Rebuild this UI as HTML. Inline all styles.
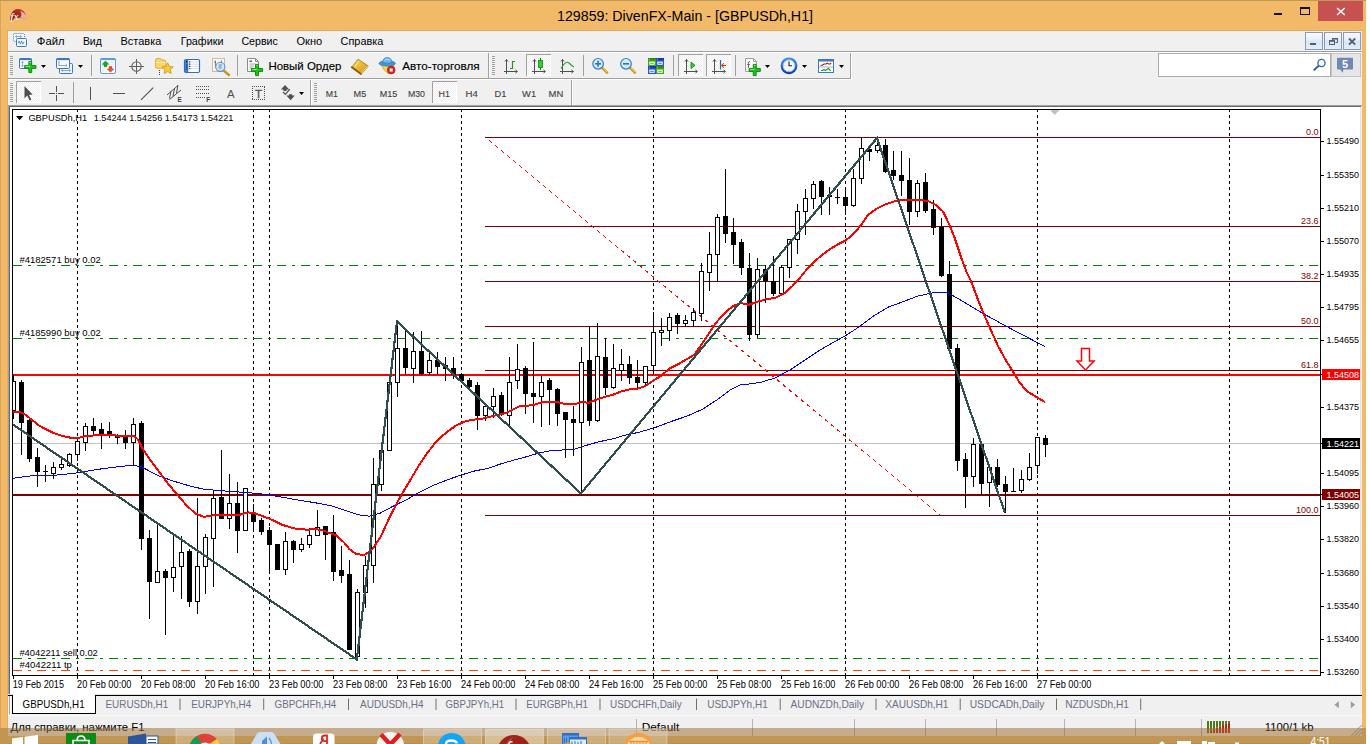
<!DOCTYPE html>
<html lang="ru"><head><meta charset="utf-8"><title>129859: DivenFX-Main - [GBPUSDh,H1]</title>
<style>
html,body{margin:0;padding:0;background:#fff;overflow:hidden}
body{width:1370px;height:744px;position:relative;font-family:"Liberation Sans", sans-serif;}
.abs{position:absolute}
#win{position:absolute;left:0;top:0;width:1366px;height:744px;background:#F2B968;overflow:hidden}
#client{position:absolute;left:7px;top:30px;width:1355px;height:706px;background:#F0F0F0;border-left:1px solid #E2AB5E;border-top:1px solid #E2AB5E;box-sizing:border-box}
svg{position:absolute;left:0;top:0;font-family:"Liberation Sans", sans-serif}
svg text{white-space:pre}
</style></head><body>
<div id="win">
<div id="client"></div>

<svg width="1366" height="744" viewBox="0 0 1366 744">
<defs><linearGradient id="gclk" x1="0" y1="0" x2="0" y2="1"><stop offset="0" stop-color="#3A8EEA"/><stop offset="1" stop-color="#0A3F9E"/></linearGradient><linearGradient id="gbook" x1="0" y1="0" x2="1" y2="1"><stop offset="0" stop-color="#F7DC6A"/><stop offset="0.55" stop-color="#E6B530"/><stop offset="1" stop-color="#C8901A"/></linearGradient><linearGradient id="gapp" x1="0" y1="1" x2="1" y2="0"><stop offset="0" stop-color="#7E0A04"/><stop offset="0.5" stop-color="#A82818"/><stop offset="1" stop-color="#C8382A"/></linearGradient><linearGradient id="gbtn" x1="0" y1="0" x2="0" y2="1"><stop offset="0" stop-color="#F6FAFE"/><stop offset="0.45" stop-color="#E6EFFA"/><stop offset="0.5" stop-color="#D9E6F6"/><stop offset="1" stop-color="#E3EDF9"/></linearGradient><pattern id="chk" width="2" height="2" patternUnits="userSpaceOnUse"><rect width="2" height="2" fill="#fff"/><rect width="1" height="1" fill="#EDEDED"/><rect x="1" y="1" width="1" height="1" fill="#EDEDED"/></pattern></defs>
<rect x="0" y="0" width="1366" height="1" fill="#BE9A58"/>
<rect x="0" y="1" width="1" height="743" fill="#D9A55C"/>
<g id="appicon"><path d="M10.3 20.8 C9.8 15 12 10 17 9 C21.5 8.3 25.2 11.5 26 16 C26.2 18 25.8 19 25 19.2 C22.5 17.5 18.5 17.2 16 18.5 C14 19.5 12.5 21 10.3 20.8 Z" fill="url(#gapp)"/><path d="M20 10.5 C23 11.8 25.6 14 26 16 C26.2 18 25.8 19 25 19.2 C23.8 18.3 22 17.6 20.2 17.4 C22 15.5 21.8 12.5 20 10.5 Z" fill="#F3C9C4" fill-opacity="0.85"/><text x="10.6" y="19.6" font-size="9.5" fill="#fff" font-style="italic" font-weight="bold" font-family="'Liberation Serif', serif">fx</text></g>
<text x="685" y="20.5" font-size="14.4" fill="#000" text-anchor="middle" textLength="256" lengthAdjust="spacingAndGlyphs">129859: DivenFX-Main - [GBPUSDh,H1]</text>
<rect x="1274" y="13" width="8" height="2" fill="#111"/>
<rect x="1300.5" y="7.5" width="9" height="7" fill="none" stroke="#111" stroke-width="1"/><rect x="1300" y="7" width="10" height="2" fill="#111"/>
<rect x="1318" y="1" width="45" height="20" fill="#C75050"/>
<path d="M1337 8 L1344.8 15 M1344.8 8 L1337 15" stroke="#fff" stroke-width="1.5" fill="none"/>
<rect x="8" y="51" width="1354" height="1" fill="#A0A0A0"/>
<rect x="8" y="52" width="1354" height="1" fill="#FFFFFF"/>
<g id="mdiicon"><rect x="13.5" y="33.5" width="11" height="8" rx="1" fill="#F4F8FD" stroke="#3B78C9" stroke-dasharray="1 1"/><rect x="16.5" y="38.5" width="10" height="8" rx="1" fill="#F4F8FD" stroke="#3B78C9"/><path d="M18 43 l1.2 -2 l1.2 3 l1.2 -3 l1.2 3 l1.2 -2" stroke="#3B78C9" stroke-width="0.8" fill="none"/><path d="M15.5 36.5 h6 m-6 0 l1.5 -1.2 m-1.5 1.2 l1.5 1.2 m4.5 -1.2 l-1.5 -1.2 m1.5 1.2 l-1.5 1.2" stroke="#5F8FD0" stroke-width="0.7" fill="none"/></g>
<text x="36.8" y="45" font-size="11.6" fill="#000" textLength="27.8" lengthAdjust="spacingAndGlyphs">Файл</text>
<text x="82.9" y="45" font-size="11.6" fill="#000" textLength="18.9" lengthAdjust="spacingAndGlyphs">Вид</text>
<text x="120.5" y="45" font-size="11.6" fill="#000" textLength="40.8" lengthAdjust="spacingAndGlyphs">Вставка</text>
<text x="180.7" y="45" font-size="11.6" fill="#000" textLength="42.7" lengthAdjust="spacingAndGlyphs">Графики</text>
<text x="241.4" y="45" font-size="11.6" fill="#000" textLength="36.5" lengthAdjust="spacingAndGlyphs">Сервис</text>
<text x="296.5" y="45" font-size="11.6" fill="#000" textLength="25.7" lengthAdjust="spacingAndGlyphs">Окно</text>
<text x="340.6" y="45" font-size="11.6" fill="#000" textLength="42.7" lengthAdjust="spacingAndGlyphs">Справка</text>
<rect x="1305.5" y="32.5" width="17" height="17" fill="url(#gbtn)" stroke="#8A9BB5"/>
<rect x="1324.5" y="32.5" width="17" height="17" fill="url(#gbtn)" stroke="#8A9BB5"/>
<rect x="1343.5" y="32.5" width="17" height="17" fill="url(#gbtn)" stroke="#8A9BB5"/>
<rect x="1310" y="43" width="6" height="2" fill="#555F70"/>
<path d="M1332.5 40 v-1.5 h5 v4 h-2" fill="none" stroke="#555F70" stroke-width="1"/><rect x="1332" y="38" width="6" height="1.6" fill="#555F70"/><rect x="1329.5" y="40.5" width="5" height="4" fill="none" stroke="#555F70" stroke-width="1"/><rect x="1329" y="40" width="6" height="1.8" fill="#555F70"/>
<path d="M1349 38.5 L1355.2 44.7 M1355.2 38.5 L1349 44.7" stroke="#555F70" stroke-width="1.9" fill="none"/>
<rect x="8" y="78" width="843" height="1" fill="#A0A0A0"/>
<rect x="8" y="79" width="844" height="1" fill="#FFFFFF"/>
<rect x="850" y="53" width="1" height="26" fill="#A0A0A0"/><rect x="851" y="53" width="1" height="26" fill="#fff"/>
<rect x="488" y="53" width="1" height="25" fill="#A0A0A0"/><rect x="489" y="53" width="1" height="25" fill="#fff"/>
<rect x="310" y="80" width="1" height="25" fill="#A0A0A0"/><rect x="311" y="80" width="1" height="25" fill="#fff"/>
<rect x="571" y="80" width="1" height="25" fill="#A0A0A0"/><rect x="572" y="80" width="1" height="25" fill="#fff"/>
<rect x="10" y="56" width="3" height="1" fill="#A0A0A0"/>
<rect x="10" y="58" width="3" height="1" fill="#A0A0A0"/>
<rect x="10" y="60" width="3" height="1" fill="#A0A0A0"/>
<rect x="10" y="62" width="3" height="1" fill="#A0A0A0"/>
<rect x="10" y="64" width="3" height="1" fill="#A0A0A0"/>
<rect x="10" y="66" width="3" height="1" fill="#A0A0A0"/>
<rect x="10" y="68" width="3" height="1" fill="#A0A0A0"/>
<rect x="10" y="70" width="3" height="1" fill="#A0A0A0"/>
<rect x="10" y="72" width="3" height="1" fill="#A0A0A0"/>
<rect x="10" y="74" width="3" height="1" fill="#A0A0A0"/>
<rect x="492" y="56" width="3" height="1" fill="#A0A0A0"/>
<rect x="492" y="58" width="3" height="1" fill="#A0A0A0"/>
<rect x="492" y="60" width="3" height="1" fill="#A0A0A0"/>
<rect x="492" y="62" width="3" height="1" fill="#A0A0A0"/>
<rect x="492" y="64" width="3" height="1" fill="#A0A0A0"/>
<rect x="492" y="66" width="3" height="1" fill="#A0A0A0"/>
<rect x="492" y="68" width="3" height="1" fill="#A0A0A0"/>
<rect x="492" y="70" width="3" height="1" fill="#A0A0A0"/>
<rect x="492" y="72" width="3" height="1" fill="#A0A0A0"/>
<rect x="492" y="74" width="3" height="1" fill="#A0A0A0"/>
<rect x="10" y="83" width="3" height="1" fill="#A0A0A0"/>
<rect x="10" y="85" width="3" height="1" fill="#A0A0A0"/>
<rect x="10" y="87" width="3" height="1" fill="#A0A0A0"/>
<rect x="10" y="89" width="3" height="1" fill="#A0A0A0"/>
<rect x="10" y="91" width="3" height="1" fill="#A0A0A0"/>
<rect x="10" y="93" width="3" height="1" fill="#A0A0A0"/>
<rect x="10" y="95" width="3" height="1" fill="#A0A0A0"/>
<rect x="10" y="97" width="3" height="1" fill="#A0A0A0"/>
<rect x="10" y="99" width="3" height="1" fill="#A0A0A0"/>
<rect x="10" y="101" width="3" height="1" fill="#A0A0A0"/>
<rect x="314" y="83" width="3" height="1" fill="#A0A0A0"/>
<rect x="314" y="85" width="3" height="1" fill="#A0A0A0"/>
<rect x="314" y="87" width="3" height="1" fill="#A0A0A0"/>
<rect x="314" y="89" width="3" height="1" fill="#A0A0A0"/>
<rect x="314" y="91" width="3" height="1" fill="#A0A0A0"/>
<rect x="314" y="93" width="3" height="1" fill="#A0A0A0"/>
<rect x="314" y="95" width="3" height="1" fill="#A0A0A0"/>
<rect x="314" y="97" width="3" height="1" fill="#A0A0A0"/>
<rect x="314" y="99" width="3" height="1" fill="#A0A0A0"/>
<rect x="314" y="101" width="3" height="1" fill="#A0A0A0"/>
<rect x="91" y="55" width="1" height="21" fill="#A0A0A0"/>
<rect x="237" y="55" width="1" height="21" fill="#A0A0A0"/>
<rect x="583" y="55" width="1" height="21" fill="#A0A0A0"/>
<rect x="673" y="55" width="1" height="21" fill="#A0A0A0"/>
<rect x="735" y="55" width="1" height="21" fill="#A0A0A0"/>
<rect x="73" y="82" width="1" height="21" fill="#A0A0A0"/>
<path d="M41 65 h5 l-2.5 3 z" fill="#000"/>
<path d="M78 65 h5 l-2.5 3 z" fill="#000"/>
<path d="M765 65 h5 l-2.5 3 z" fill="#000"/>
<path d="M802 65 h5 l-2.5 3 z" fill="#000"/>
<path d="M839 65 h5 l-2.5 3 z" fill="#000"/>
<path d="M299 92 h5 l-2.5 3 z" fill="#000"/>
<rect x="16" y="81" width="25" height="22" fill="url(#chk)"/>
<path d="M16.5 103 V81.5 H41" stroke="#A0A0A0" fill="none"/>
<path d="M17 102.5 H40.5 V82" stroke="#fff" fill="none"/>
<rect x="432" y="81" width="25" height="22" fill="url(#chk)"/>
<path d="M432.5 103 V81.5 H457" stroke="#A0A0A0" fill="none"/>
<path d="M433 102.5 H456.5 V82" stroke="#fff" fill="none"/>
<rect x="526" y="54" width="25" height="22" fill="url(#chk)"/>
<path d="M526.5 76 V54.5 H551" stroke="#A0A0A0" fill="none"/>
<path d="M527 75.5 H550.5 V55" stroke="#fff" fill="none"/>
<rect x="678" y="54" width="25" height="22" fill="url(#chk)"/>
<path d="M678.5 76 V54.5 H703" stroke="#A0A0A0" fill="none"/>
<path d="M679 75.5 H702.5 V55" stroke="#fff" fill="none"/>
<rect x="706" y="54" width="25" height="22" fill="url(#chk)"/>
<path d="M706.5 76 V54.5 H731" stroke="#A0A0A0" fill="none"/>
<path d="M707 75.5 H730.5 V55" stroke="#fff" fill="none"/>
<rect x="19.5" y="58.5" width="12" height="10" rx="1" fill="#F5F9FE" stroke="#3A78BF"/><rect x="19.5" y="58.5" width="12" height="1.6" fill="#3A78BF"/><path d="M22.5 61.5 v5 m-1.2 -3.8 l1.2 -1.2 l1.2 1.2 m-2.4 2.6 l1.2 1.2 l1.2 -1.2" stroke="#7F9FC8" stroke-width="0.8" fill="none"/>
<path d="M28.900000000000002 61.4 h2.8 v4.199999999999999 h4.199999999999999 v2.8 h-4.199999999999999 v4.199999999999999 h-2.8 v-4.199999999999999 h-4.199999999999999 v-2.8 h4.199999999999999 z" fill="#22C322" stroke="#0A8A0A" stroke-width="1" stroke-linejoin="round"/>
<path d="M29.700000000000003 62.4 h1.4 M25.700000000000003 66.39999999999999 h4.199999999999999" stroke="#8DF08D" stroke-width="1" fill="none"/>
<rect x="59.5" y="63.5" width="13" height="10" rx="1" fill="#EEF4FC" stroke="#3A78BF"/><rect x="56.5" y="58.5" width="13" height="10" rx="1" fill="#F5F9FE" stroke="#3A78BF"/><rect x="56.5" y="58.5" width="13" height="1.6" fill="#3A78BF"/><path d="M59 61 v5 M59 65.5 h8 m-1.3 -1.2 l1.3 1.2 l-1.3 1.2 M61.5 70.5 h9 m-7.7 -1.2 l-1.3 1.2 l1.3 1.2 m6.4 -2.4 l1.3 1.2 l-1.3 1.2" stroke="#6F94C5" stroke-width="0.8" fill="none"/>
<rect x="100.5" y="58.5" width="15" height="15" rx="1.5" fill="#FAFCFF" stroke="#5B9BE0"/><rect x="100.5" y="58.5" width="15" height="1.6" fill="#5B9BE0"/><path d="M109 62.5 h5 M109 65 h5 M102 68.5 h4 M102 71 h4" stroke="#D8DDE6" stroke-width="0.7"/><path d="M105.5 61 l3.3 3.3 h-1.8 v2.4 h-3 v-2.4 h-1.8 z" fill="#1FA81F" stroke="#0C7A0C" stroke-width="0.5"/><path d="M110.5 72.3 l3.3 -3.3 h-1.8 v-2.4 h-3 v2.4 h-1.8 z" fill="#F0532B" stroke="#C43A14" stroke-width="0.5"/>
<circle cx="136.5" cy="66.5" r="4.7" fill="none" stroke="#606060" stroke-width="1.1"/><path d="M129 66.5 h15 M136.5 59 v15" stroke="#606060" stroke-width="1"/>
<path d="M155.5 60 q0 -1.5 1.5 -1.5 h3 q1.2 0 1.6 1.5 h3 q1.2 0 1.2 1.2 v6 q0 1 -1 1 h-8.3 q-1 0 -1 -1 z" fill="#F7D66A" stroke="#D9A520" stroke-width="0.8"/><path d="M156 62.5 h9.5" stroke="#FBEBA8" stroke-width="1.2"/><rect x="159" y="70" width="1" height="1" fill="#444"/><rect x="159" y="72" width="1" height="1" fill="#444"/><rect x="159" y="74" width="1" height="1" fill="#444"/><path d="M167.7 62.8 l1.7 3.6 l3.9 0.5 l-2.9 2.7 l0.8 3.9 l-3.5 -1.9 l-3.5 1.9 l0.8 -3.9 l-2.9 -2.7 l3.9 -0.5 z" fill="#F6CB3C" stroke="#C89310" stroke-width="0.8" stroke-linejoin="round"/>
<rect x="184.5" y="59.5" width="15" height="13" rx="1.5" fill="#fff" stroke="#2D6CC0" stroke-width="1.2"/><rect x="185" y="60" width="3.3" height="12" fill="#3F7FD6"/><path d="M190 62 h8.5 M190 64.2 h8.5 M190 66.4 h8.5 M190 68.6 h8.5" stroke="#C9D8F2" stroke-width="0.8"/><rect x="186" y="61" width="1.2" height="1.2" fill="#000"/><rect x="186.3" y="64" width="1" height="6" fill="#1B4A96"/><rect x="189" y="61.3" width="1.3" height="1.3" fill="#E02020"/><rect x="189" y="63.5" width="1.3" height="1.3" fill="#205020"/><rect x="189" y="65.7" width="1.3" height="1.3" fill="#205020"/><rect x="189" y="67.9" width="1.3" height="1.3" fill="#E02020"/>
<rect x="212.5" y="58.5" width="12" height="13" fill="#F8F6F0" stroke="#C8BCA0"/><path d="M215.5 60.5 v7 M214 62 h1.5 M215.5 65 h1.5 M221.5 60.5 v6 M220 62.5 h1.5 M221.5 64.5 h1.5" stroke="#707070" stroke-width="0.9" fill="none"/><path d="M223.5 70.5 L229 75" stroke="#C8980E" stroke-width="2.4" stroke-linecap="round"/><circle cx="220.3" cy="66.8" r="4.6" fill="#CFE3F5" fill-opacity="0.85" stroke="#5B93D6" stroke-width="1.1"/><rect x="218.6" y="64" width="3" height="5" fill="#9CB4CC"/>
<path d="M247.5 58.5 h8 l3 3 v10 h-11 z" fill="#FBFBFB" stroke="#8C8C8C" stroke-linejoin="round"/><path d="M255.5 58.5 v3 h3" fill="none" stroke="#8C8C8C"/><rect x="249.5" y="60.5" width="2.5" height="1.5" fill="#606060"/><path d="M249.5 64 h6 M249.5 66 h4 M249.5 68 h3" stroke="#909090" stroke-width="0.8"/>
<path d="M255.6 64.4 h2.8 v4.199999999999999 h4.199999999999999 v2.8 h-4.199999999999999 v4.199999999999999 h-2.8 v-4.199999999999999 h-4.199999999999999 v-2.8 h4.199999999999999 z" fill="#22C322" stroke="#0A8A0A" stroke-width="1" stroke-linejoin="round"/>
<path d="M256.4 65.4 h1.4 M252.4 69.39999999999999 h4.199999999999999" stroke="#8DF08D" stroke-width="1" fill="none"/>
<text x="268.4" y="69.5" font-size="11.5" fill="#000" textLength="73" lengthAdjust="spacingAndGlyphs" stroke="#000" stroke-width="0.15">Новый Ордер</text>
<path d="M351.8 67.2 L358 59.2 L368 65.8 L361 74 Z" fill="url(#gbook)" stroke="#A87412" stroke-width="0.8" stroke-linejoin="round"/><path d="M351.8 67.2 L361 74" stroke="#8A5A0A" stroke-width="1.8" stroke-linecap="round"/><path d="M361.6 73.4 L367.8 66.4" stroke="#F7EBC0" stroke-width="1.3"/><path d="M361.2 74.2 L368.3 66.2" stroke="#B07A10" stroke-width="0.7"/><path d="M354.5 66.8 L358.6 61.5" stroke="#FBEFA8" stroke-width="1" stroke-opacity="0.9"/>
<path d="M381.5 65 Q383 70.5 388.5 73.6 Q392.5 72 394 65 Z" fill="#F7D84E" stroke="#D8A818" stroke-width="0.8" stroke-linejoin="round"/><ellipse cx="387.2" cy="63.4" rx="8.2" ry="2.7" fill="#3F97DC" stroke="#2A78BE" stroke-width="0.7"/><path d="M382.6 62.6 q0.4 -5 4.7 -5 q4.2 0 4.7 5 q-4.7 1.6 -9.4 0 z" fill="#6DB8EC" stroke="#2A78BE" stroke-width="0.7"/><path d="M384.5 60 q2.5 -1.8 5.5 0" stroke="#B8E0F8" stroke-width="0.9" fill="none"/><circle cx="391.2" cy="70" r="3.9" fill="#E0241C" stroke="#B01008" stroke-width="0.6"/><rect x="389.7" y="68.5" width="3" height="3" fill="#fff"/>
<text x="402.2" y="69.5" font-size="11.5" fill="#000" textLength="77.4" lengthAdjust="spacingAndGlyphs" stroke="#000" stroke-width="0.15">Авто-торговля</text>
<path d="M506.5 59.5 V74 M504 71.5 H517" stroke="#505050" stroke-width="1" fill="none"/><path d="M505 61.5 L506.5 59.5 L508 61.5 M515.5 70 L517.5 71.5 L515.5 73" stroke="#505050" stroke-width="1" fill="none"/>
<path d="M514.5 61.5 h-2 v7 h-2.5 M512.5 61.5 h2.5" stroke="#1A9A1A" stroke-width="1.2" fill="none"/>
<path d="M534.5 59.5 V74 M532 71.5 H545" stroke="#505050" stroke-width="1" fill="none"/><path d="M533 61.5 L534.5 59.5 L536 61.5 M543.5 70 L545.5 71.5 L543.5 73" stroke="#505050" stroke-width="1" fill="none"/>
<path d="M540.5 58 v12" stroke="#0C8A0C" stroke-width="1"/><rect x="538.5" y="60.5" width="4" height="7" fill="#33CC33" stroke="#0C8A0C" stroke-width="0.8"/>
<path d="M562.5 59.5 V74 M560 71.5 H573" stroke="#505050" stroke-width="1" fill="none"/><path d="M561 61.5 L562.5 59.5 L564 61.5 M571.5 70 L573.5 71.5 L571.5 73" stroke="#505050" stroke-width="1" fill="none"/>
<path d="M561 68.5 Q566 60 569 63 T574 67" stroke="#2E9E2E" stroke-width="1.1" fill="none"/>
<path d="M602.1 67.8 L607.1 72.6" stroke="#C89A14" stroke-width="2.6" stroke-linecap="round"/><path d="M602.5 67.6 L607.1 72" stroke="#F3D768" stroke-width="0.9" stroke-linecap="round"/>
<circle cx="598.1" cy="63.8" r="5.3" fill="#D6EAF8" stroke="#2D7DD2" stroke-width="1.2"/>
<path d="M595.1 63.8 h6" stroke="#2B77B5" stroke-width="1.6"/>
<path d="M598.1 60.8 v6" stroke="#2B77B5" stroke-width="1.6"/>
<path d="M630 67.8 L635 72.6" stroke="#C89A14" stroke-width="2.6" stroke-linecap="round"/><path d="M630.4 67.6 L635 72" stroke="#F3D768" stroke-width="0.9" stroke-linecap="round"/>
<circle cx="626" cy="63.8" r="5.3" fill="#D6EAF8" stroke="#2D7DD2" stroke-width="1.2"/>
<path d="M623 63.8 h6" stroke="#2B77B5" stroke-width="1.6"/>
<rect x="648" y="58" width="8" height="8" fill="#43AA1E"/><rect x="648" y="58" width="8" height="2.2" fill="#2E8A10"/><rect x="649.3" y="61.6" width="5.4" height="3.2" fill="#fff"/><rect x="650.2" y="62.8" width="3.6" height="0.9" fill="#43AA1E"/><rect x="648.9" y="58.8" width="0.9" height="0.9" fill="#fff" fill-opacity="0.8"/>
<rect x="656" y="58" width="8" height="8" fill="#2458D8"/><rect x="656" y="58" width="8" height="2.2" fill="#123CB0"/><rect x="657.3" y="61.6" width="5.4" height="3.2" fill="#fff"/><rect x="658.2" y="62.8" width="3.6" height="0.9" fill="#2458D8"/><rect x="656.9" y="58.8" width="0.9" height="0.9" fill="#fff" fill-opacity="0.8"/>
<rect x="648" y="66" width="8" height="8" fill="#2458D8"/><rect x="648" y="66" width="8" height="2.2" fill="#123CB0"/><rect x="649.3" y="69.6" width="5.4" height="3.2" fill="#fff"/><rect x="650.2" y="70.8" width="3.6" height="0.9" fill="#2458D8"/><rect x="648.9" y="66.8" width="0.9" height="0.9" fill="#fff" fill-opacity="0.8"/>
<rect x="656" y="66" width="8" height="8" fill="#43AA1E"/><rect x="656" y="66" width="8" height="2.2" fill="#2E8A10"/><rect x="657.3" y="69.6" width="5.4" height="3.2" fill="#fff"/><rect x="658.2" y="70.8" width="3.6" height="0.9" fill="#43AA1E"/><rect x="656.9" y="66.8" width="0.9" height="0.9" fill="#fff" fill-opacity="0.8"/>
<path d="M686.5 59.5 V74 M684 71.5 H697" stroke="#505050" stroke-width="1" fill="none"/><path d="M685 61.5 L686.5 59.5 L688 61.5 M695.5 70 L697.5 71.5 L695.5 73" stroke="#505050" stroke-width="1" fill="none"/>
<path d="M691 62 L695 65.3 L691 68.6 Z" fill="#3BC43B" stroke="#0C8A0C" stroke-width="0.8"/>
<path d="M714.5 59.5 V74 M712 71.5 H725" stroke="#505050" stroke-width="1" fill="none"/><path d="M713 61.5 L714.5 59.5 L716 61.5 M723.5 70 L725.5 71.5 L723.5 73" stroke="#505050" stroke-width="1" fill="none"/>
<path d="M720.5 60 v9.5" stroke="#1F6FB0" stroke-width="1.2"/><path d="M726 65.5 h-4 M723.8 63.3 l-2.2 2.2 l2.2 2.2" stroke="#D0420A" stroke-width="1.1" fill="none"/>
<path d="M745.5 58.5 h8 l3 3 v10 h-11 z" fill="#FBFBFB" stroke="#A0A0A0" stroke-linejoin="round"/><path d="M753.5 58.5 v3 h3" fill="none" stroke="#A0A0A0"/><path d="M750 61.5 q-1.6 0 -1.6 1.6 v5 M747.3 64.5 h2.6" stroke="#505050" stroke-width="0.9" fill="none"/>
<path d="M753.3000000000001 64.4 h2.8 v4.199999999999999 h4.199999999999999 v2.8 h-4.199999999999999 v4.199999999999999 h-2.8 v-4.199999999999999 h-4.199999999999999 v-2.8 h4.199999999999999 z" fill="#22C322" stroke="#0A8A0A" stroke-width="1" stroke-linejoin="round"/>
<path d="M754.1 65.4 h1.4 M750.1 69.39999999999999 h4.199999999999999" stroke="#8DF08D" stroke-width="1" fill="none"/>
<circle cx="789" cy="65.8" r="7.3" fill="#F4F7FA" stroke="url(#gclk)" stroke-width="2.2"/><circle cx="789" cy="65.8" r="6" fill="none" stroke="#6AA7EA" stroke-width="0.6"/><path d="M789 61.5 v4.3 h3" stroke="#222" stroke-width="1.1" fill="none"/><path d="M789 60.4 v0.8 M789 70.4 v0.8 M783.6 65.8 h0.8 M793.6 65.8 h0.8" stroke="#999" stroke-width="0.8"/>
<rect x="818.5" y="59.5" width="15" height="13" fill="#fff" stroke="#3A78C8"/><rect x="818.5" y="59.5" width="15" height="2" fill="#3A78C8"/><path d="M819 67 h14" stroke="#7FA8DE" stroke-width="0.8"/><path d="M820.5 65.2 h2 l1.5 -1.2 h2 l1.2 -0.9 l1.5 0.9 h1.5 l1 -0.8" stroke="#A01810" stroke-width="1.1" fill="none"/><path d="M821 70.5 h1.5 l1.5 -1 l1.5 1 l1.5 -1 l1.5 -1.2 l1.3 1.5 l1 1" stroke="#1C9A1C" stroke-width="1.1" fill="none"/>
<rect x="1158.5" y="53.5" width="172" height="23" fill="#fff" stroke="#ABADB3"/>
<path d="M1319.3 65.3 L1314.3 69.8" stroke="#2B63C6" stroke-width="2" stroke-linecap="round"/><circle cx="1321.5" cy="63" r="3.6" fill="#fff" stroke="#2B63C6" stroke-width="1.3"/>
<rect x="1331.5" y="53.5" width="29" height="23" fill="#E6E6E6" stroke="#C4C4C4"/>
<path d="M1337 58.5 q0 -0.7 0.7 -0.7 h14.6 q0.7 0 0.7 0.7 v10.3 q0 0.7 -0.7 0.7 h-8.8 l-0.8 3.2 l-2.6 -3.2 h-2.4 q-0.7 0 -0.7 -0.7 z" fill="#6F88B8"/>
<text x="1345" y="68" font-size="11" fill="#fff" text-anchor="middle" font-weight="bold">5</text>
<path d="M24.5 86 V98.2 L27.3 95.6 L29.6 100.4 L31.3 99.6 L29 95 L32.6 94.6 Z" fill="#505050"/>
<path d="M49 93.5 h6 m3 0 h6 M56.5 86 v6 m0 3 v6" stroke="#505050" stroke-width="1"/><rect x="56" y="93" width="1" height="1" fill="#505050"/>
<path d="M90.5 87 v13" stroke="#505050" stroke-width="1"/>
<path d="M113 93.5 h12" stroke="#505050" stroke-width="1"/>
<path d="M141 99.8 L153.2 87.6" stroke="#505050" stroke-width="1.1"/>
<path d="M167 95 L178 85.5 M169.5 99.5 L181 90 M171 91 l-1.5 7.5 M174.5 88.5 l-1.5 8 M178 85 l-1.5 8" stroke="#505050" stroke-width="1" fill="none"/>
<text x="177.6" y="101.6" font-size="6.5" fill="#404040" font-weight="bold">E</text>
<rect x="196" y="86" width="1" height="1" fill="#505050"/><rect x="198" y="86" width="1" height="1" fill="#505050"/><rect x="200" y="86" width="1" height="1" fill="#505050"/><rect x="202" y="86" width="1" height="1" fill="#505050"/><rect x="204" y="86" width="1" height="1" fill="#505050"/><rect x="206" y="86" width="1" height="1" fill="#505050"/><rect x="208" y="86" width="1" height="1" fill="#505050"/>
<rect x="196" y="89" width="1" height="1" fill="#505050"/><rect x="198" y="89" width="1" height="1" fill="#505050"/><rect x="200" y="89" width="1" height="1" fill="#505050"/><rect x="202" y="89" width="1" height="1" fill="#505050"/><rect x="204" y="89" width="1" height="1" fill="#505050"/><rect x="206" y="89" width="1" height="1" fill="#505050"/><rect x="208" y="89" width="1" height="1" fill="#505050"/>
<rect x="196" y="93" width="1" height="1" fill="#505050"/><rect x="198" y="93" width="1" height="1" fill="#505050"/><rect x="200" y="93" width="1" height="1" fill="#505050"/><rect x="202" y="93" width="1" height="1" fill="#505050"/><rect x="204" y="93" width="1" height="1" fill="#505050"/><rect x="206" y="93" width="1" height="1" fill="#505050"/><rect x="208" y="93" width="1" height="1" fill="#505050"/>
<rect x="196" y="97" width="1" height="1" fill="#505050"/><rect x="198" y="97" width="1" height="1" fill="#505050"/><rect x="200" y="97" width="1" height="1" fill="#505050"/><rect x="202" y="97" width="1" height="1" fill="#505050"/><rect x="204" y="97" width="1" height="1" fill="#505050"/><rect x="206" y="97" width="1" height="1" fill="#505050"/><rect x="208" y="97" width="1" height="1" fill="#505050"/>
<rect x="205" y="96" width="6" height="6" fill="#F0F0F0"/>
<text x="206.2" y="101.6" font-size="6.5" fill="#404040" font-weight="bold">F</text>
<text x="227" y="97.6" font-size="11.5" fill="#505050">A</text>
<rect x="252" y="86" width="1" height="1" fill="#505050"/><rect x="252" y="99" width="1" height="1" fill="#505050"/><rect x="254" y="86" width="1" height="1" fill="#505050"/><rect x="254" y="99" width="1" height="1" fill="#505050"/><rect x="256" y="86" width="1" height="1" fill="#505050"/><rect x="256" y="99" width="1" height="1" fill="#505050"/><rect x="258" y="86" width="1" height="1" fill="#505050"/><rect x="258" y="99" width="1" height="1" fill="#505050"/><rect x="260" y="86" width="1" height="1" fill="#505050"/><rect x="260" y="99" width="1" height="1" fill="#505050"/><rect x="262" y="86" width="1" height="1" fill="#505050"/><rect x="262" y="99" width="1" height="1" fill="#505050"/><rect x="264" y="86" width="1" height="1" fill="#505050"/><rect x="264" y="99" width="1" height="1" fill="#505050"/><rect x="252" y="86" width="1" height="1" fill="#505050"/><rect x="264" y="87" width="1" height="1" fill="#505050"/><rect x="252" y="88" width="1" height="1" fill="#505050"/><rect x="264" y="89" width="1" height="1" fill="#505050"/><rect x="252" y="90" width="1" height="1" fill="#505050"/><rect x="264" y="91" width="1" height="1" fill="#505050"/><rect x="252" y="92" width="1" height="1" fill="#505050"/><rect x="264" y="93" width="1" height="1" fill="#505050"/><rect x="252" y="94" width="1" height="1" fill="#505050"/><rect x="264" y="95" width="1" height="1" fill="#505050"/><rect x="252" y="96" width="1" height="1" fill="#505050"/><rect x="264" y="97" width="1" height="1" fill="#505050"/><rect x="252" y="98" width="1" height="1" fill="#505050"/><rect x="264" y="99" width="1" height="1" fill="#505050"/>
<text x="258.6" y="97.8" font-size="11.5" fill="#505050" text-anchor="middle" stroke="#505050" stroke-width="0.3">T</text>
<path d="M285 85 L289.2 89.6 H286.6 V91 H283.4 V89.6 H280.8 Z M290.6 100.2 L294.8 95.6 H292.2 V94.2 H289 V95.6 H286.4 Z" fill="#505050"/><path d="M283 92 l2.4 2.4 l4.4 -5.2" stroke="#505050" stroke-width="1.3" fill="none"/>
<text x="325.8" y="96.7" font-size="9.6" fill="#404040" textLength="12.2" lengthAdjust="spacingAndGlyphs" stroke="#404040" stroke-width="0.12">M1</text>
<text x="353.6" y="96.7" font-size="9.6" fill="#404040" textLength="12.7" lengthAdjust="spacingAndGlyphs" stroke="#404040" stroke-width="0.12">M5</text>
<text x="379.8" y="96.7" font-size="9.6" fill="#404040" textLength="17.6" lengthAdjust="spacingAndGlyphs" stroke="#404040" stroke-width="0.12">M15</text>
<text x="407.9" y="96.7" font-size="9.6" fill="#404040" textLength="17.1" lengthAdjust="spacingAndGlyphs" stroke="#404040" stroke-width="0.12">M30</text>
<text x="438.5" y="96.7" font-size="9.6" fill="#404040" textLength="11.4" lengthAdjust="spacingAndGlyphs" stroke="#404040" stroke-width="0.12">H1</text>
<text x="465.6" y="96.7" font-size="9.6" fill="#404040" textLength="12.3" lengthAdjust="spacingAndGlyphs" stroke="#404040" stroke-width="0.12">H4</text>
<text x="494.5" y="96.7" font-size="9.6" fill="#404040" textLength="11.9" lengthAdjust="spacingAndGlyphs" stroke="#404040" stroke-width="0.12">D1</text>
<text x="522.1" y="96.7" font-size="9.6" fill="#404040" textLength="14" lengthAdjust="spacingAndGlyphs" stroke="#404040" stroke-width="0.12">W1</text>
<text x="548.6" y="96.7" font-size="9.6" fill="#404040" textLength="14.7" lengthAdjust="spacingAndGlyphs" stroke="#404040" stroke-width="0.12">MN</text>
<rect x="8" y="694" width="1354" height="1" fill="#E3E3E3"/>
<rect x="8" y="695" width="1354" height="1" fill="#000"/>
<rect x="8" y="696" width="1354" height="19" fill="#F0F0F0"/>
<rect x="8" y="715" width="1354" height="1" fill="#FBFBFB"/>
<rect x="12.5" y="695.5" width="83" height="18" fill="#fff" stroke="#000"/><rect x="13" y="693" width="82" height="4" fill="#fff"/>
<rect x="9" y="696" width="1" height="18" fill="#A0A0A0"/><rect x="10" y="696" width="1" height="18" fill="#fff"/>
<text x="22.6" y="708" font-size="10.2" fill="#000" textLength="62" lengthAdjust="spacingAndGlyphs">GBPUSDh,H1</text>
<text x="105.5" y="708" font-size="10.2" fill="#6A7084" textLength="62.7" lengthAdjust="spacingAndGlyphs">EURUSDh,H1</text>
<text x="191.2" y="708" font-size="10.2" fill="#6A7084" textLength="60.0" lengthAdjust="spacingAndGlyphs">EURJPYh,H4</text>
<text x="274.5" y="708" font-size="10.2" fill="#6A7084" textLength="61.7" lengthAdjust="spacingAndGlyphs">GBPCHFh,H4</text>
<text x="360" y="708" font-size="10.2" fill="#6A7084" textLength="63.5" lengthAdjust="spacingAndGlyphs">AUDUSDh,H4</text>
<text x="445.5" y="708" font-size="10.2" fill="#6A7084" textLength="58.7" lengthAdjust="spacingAndGlyphs">GBPJPYh,H1</text>
<text x="526.2" y="708" font-size="10.2" fill="#6A7084" textLength="61.8" lengthAdjust="spacingAndGlyphs">EURGBPh,H1</text>
<text x="610" y="708" font-size="10.2" fill="#6A7084" textLength="71.7" lengthAdjust="spacingAndGlyphs">USDCHFh,Daily</text>
<text x="707.2" y="708" font-size="10.2" fill="#6A7084" textLength="60.5" lengthAdjust="spacingAndGlyphs">USDJPYh,H1</text>
<text x="790.5" y="708" font-size="10.2" fill="#6A7084" textLength="73.5" lengthAdjust="spacingAndGlyphs">AUDNZDh,Daily</text>
<text x="885.2" y="708" font-size="10.2" fill="#6A7084" textLength="63.3" lengthAdjust="spacingAndGlyphs">XAUUSDh,H1</text>
<text x="969.7" y="708" font-size="10.2" fill="#6A7084" textLength="74.8" lengthAdjust="spacingAndGlyphs">USDCADh,Daily</text>
<text x="1065.2" y="708" font-size="10.2" fill="#6A7084" textLength="63.8" lengthAdjust="spacingAndGlyphs">NZDUSDh,H1</text>
<rect x="179.5" y="698.5" width="1" height="11.5" fill="#707070"/>
<rect x="263.2" y="698.5" width="1" height="11.5" fill="#707070"/>
<rect x="348.0" y="698.5" width="1" height="11.5" fill="#707070"/>
<rect x="435.5" y="698.5" width="1" height="11.5" fill="#707070"/>
<rect x="515.5" y="698.5" width="1" height="11.5" fill="#707070"/>
<rect x="599.5" y="698.5" width="1" height="11.5" fill="#707070"/>
<rect x="696.0" y="698.5" width="1" height="11.5" fill="#707070"/>
<rect x="779.7" y="698.5" width="1" height="11.5" fill="#707070"/>
<rect x="875.5" y="698.5" width="1" height="11.5" fill="#707070"/>
<rect x="959.7" y="698.5" width="1" height="11.5" fill="#707070"/>
<rect x="1056.0" y="698.5" width="1" height="11.5" fill="#707070"/>
<rect x="1140.2" y="698.5" width="1" height="11.5" fill="#707070"/>
<path d="M1338.8 701.2 v7 l-4.4 -3.5 z M1350.8 701.2 v7 l4.4 -3.5 z" fill="#9C9C9C"/>
<text x="10.5" y="730.8" font-size="11.2" fill="#000" textLength="134" lengthAdjust="spacingAndGlyphs">Для справки, нажмите F1</text>
<rect x="636" y="719" width="1" height="17" fill="#B4B4B4"/>
<rect x="752" y="719" width="1" height="17" fill="#B4B4B4"/>
<rect x="854" y="719" width="1" height="17" fill="#B4B4B4"/>
<rect x="925" y="719" width="1" height="17" fill="#B4B4B4"/>
<rect x="996" y="719" width="1" height="17" fill="#B4B4B4"/>
<rect x="1064" y="719" width="1" height="17" fill="#B4B4B4"/>
<rect x="1135" y="719" width="1" height="17" fill="#B4B4B4"/>
<rect x="1201" y="719" width="1" height="17" fill="#B4B4B4"/>
<text x="641.7" y="730.8" font-size="11.2" fill="#000" textLength="37.5" lengthAdjust="spacingAndGlyphs">Default</text>
<text x="1264.7" y="730.8" font-size="11.2" fill="#000" textLength="48.8" lengthAdjust="spacingAndGlyphs">1100/1 kb</text>
<rect x="1207" y="721" width="2" height="10.5" fill="#4E7A12"/><rect x="1207" y="731.5" width="2" height="1.5" fill="#B02818"/>
<rect x="1210" y="721" width="2" height="9.2" fill="#4E7A12"/><rect x="1210" y="730.2" width="2" height="2.8" fill="#B02818"/>
<rect x="1213" y="721" width="2" height="7.9" fill="#4E7A12"/><rect x="1213" y="728.9" width="2" height="4.1" fill="#B02818"/>
<rect x="1216" y="721" width="2" height="6.6" fill="#4E7A12"/><rect x="1216" y="727.6" width="2" height="5.4" fill="#B02818"/>
<rect x="1219" y="721" width="2" height="5.3" fill="#4E7A12"/><rect x="1219" y="726.3" width="2" height="6.7" fill="#B02818"/>
<rect x="1222" y="721" width="2" height="4.0" fill="#4E7A12"/><rect x="1222" y="725.0" width="2" height="8.0" fill="#B02818"/>
<rect x="1225" y="721" width="2" height="2.7" fill="#4E7A12"/><rect x="1225" y="723.7" width="2" height="9.3" fill="#B02818"/>
<rect x="1228" y="721" width="2" height="1.4" fill="#4E7A12"/><rect x="1228" y="722.4" width="2" height="10.6" fill="#B02818"/>
<path d="M1351 736 L1362 725 M1354.5 736 L1362 728.5 M1358 736 L1362 732" stroke="#B8B8B8" stroke-width="1.2"/>
<rect x="8" y="105" width="1354" height="589" fill="#fff"/>
<rect x="8" y="105" width="1354" height="1" fill="#A0A0A0"/>
<rect x="9" y="106" width="1353" height="1" fill="#696969"/>
<rect x="8" y="105" width="1" height="589" fill="#A0A0A0"/>
<rect x="9" y="106" width="1" height="588" fill="#696969"/>
<rect x="1360" y="107" width="1" height="587" fill="#E3E3E3"/><rect x="1361" y="106" width="1" height="589" fill="#F4F4F4"/>
<svg x="13" y="110" width="1307" height="565" viewBox="13 110 1307 565" overflow="hidden">
<path d="M77.5 109 V675" stroke="#000" stroke-width="1" stroke-dasharray="3 3"/>
<path d="M253.5 109 V675" stroke="#000" stroke-width="1" stroke-dasharray="3 3"/>
<path d="M269.5 109 V675" stroke="#000" stroke-width="1" stroke-dasharray="3 3"/>
<path d="M461.5 109 V675" stroke="#000" stroke-width="1" stroke-dasharray="3 3"/>
<path d="M653.5 109 V675" stroke="#000" stroke-width="1" stroke-dasharray="3 3"/>
<path d="M845.5 109 V675" stroke="#000" stroke-width="1" stroke-dasharray="3 3"/>
<path d="M1037.5 109 V675" stroke="#000" stroke-width="1" stroke-dasharray="3 3"/>
<path d="M1229.5 109 V675" stroke="#000" stroke-width="1" stroke-dasharray="3 3"/>
<rect x="13" y="443" width="1307" height="1" fill="#C0C0C0"/>
<rect x="485" y="137" width="835" height="1" fill="#800000"/>
<rect x="485" y="226" width="835" height="1" fill="#800000"/>
<rect x="485" y="281" width="835" height="1" fill="#800000"/>
<rect x="485" y="326" width="835" height="1" fill="#800000"/>
<rect x="485" y="370" width="835" height="1" fill="#800000"/>
<rect x="485" y="515" width="835" height="1" fill="#800000"/>
<path d="M489 140.4 L940.5 515.5" stroke="#FF0000" stroke-width="1" stroke-dasharray="3.6 4.2" shape-rendering="crispEdges"/>
<path d="M13 265.5 H1320" stroke="#008000" stroke-width="1" stroke-dasharray="9 6 3 6"/>
<path d="M13 338.5 H1320" stroke="#008000" stroke-width="1" stroke-dasharray="9 6 3 6"/>
<path d="M13 658.5 H1320" stroke="#008000" stroke-width="1" stroke-dasharray="9 6 3 6"/>
<path d="M13 670.5 H1320" stroke="#FF4500" stroke-width="1" stroke-dasharray="9 6 3 6"/>
<rect x="13" y="374" width="1307" height="2" fill="#FF0000"/>
<rect x="13" y="494" width="1307" height="2" fill="#800000"/>
<rect x="13" y="375" width="1" height="44" fill="#000"/>
<rect x="11.5" y="381.5" width="4" height="29" fill="#fff" stroke="#000" stroke-width="1"/>
<rect x="21" y="380" width="1" height="75" fill="#000"/>
<rect x="19" y="382" width="5" height="41" fill="#000"/>
<rect x="29" y="419" width="1" height="43" fill="#000"/>
<rect x="27" y="420" width="5" height="39" fill="#000"/>
<rect x="37" y="448" width="1" height="39" fill="#000"/>
<rect x="35" y="457" width="5" height="15" fill="#000"/>
<rect x="45" y="465" width="1" height="17" fill="#000"/>
<rect x="43" y="471" width="5" height="1" fill="#000"/>
<rect x="53" y="462" width="1" height="17" fill="#000"/>
<rect x="51.5" y="467.5" width="4" height="6" fill="#fff" stroke="#000" stroke-width="1"/>
<rect x="61" y="459" width="1" height="11" fill="#000"/>
<rect x="59.5" y="464.5" width="4" height="3" fill="#fff" stroke="#000" stroke-width="1"/>
<rect x="69" y="453" width="1" height="14" fill="#000"/>
<rect x="67.5" y="454.5" width="4" height="11" fill="#fff" stroke="#000" stroke-width="1"/>
<rect x="77" y="439" width="1" height="22" fill="#000"/>
<rect x="75.5" y="441.5" width="4" height="13" fill="#fff" stroke="#000" stroke-width="1"/>
<rect x="85" y="423" width="1" height="28" fill="#000"/>
<rect x="83.5" y="426.5" width="4" height="16" fill="#fff" stroke="#000" stroke-width="1"/>
<rect x="93" y="418" width="1" height="17" fill="#000"/>
<rect x="91" y="426" width="5" height="5" fill="#000"/>
<rect x="101" y="423" width="1" height="26" fill="#000"/>
<rect x="99" y="429" width="5" height="5" fill="#000"/>
<rect x="109" y="422" width="1" height="16" fill="#000"/>
<rect x="107" y="431" width="5" height="4" fill="#000"/>
<rect x="117" y="434" width="1" height="10" fill="#000"/>
<rect x="115" y="436" width="5" height="2" fill="#000"/>
<rect x="125" y="430" width="1" height="19" fill="#000"/>
<rect x="123" y="437" width="5" height="6" fill="#000"/>
<rect x="133" y="418" width="1" height="47" fill="#000"/>
<rect x="131.5" y="424.5" width="4" height="18" fill="#fff" stroke="#000" stroke-width="1"/>
<rect x="141" y="421" width="1" height="129" fill="#000"/>
<rect x="139" y="423" width="5" height="116" fill="#000"/>
<rect x="149" y="530" width="1" height="89" fill="#000"/>
<rect x="147" y="538" width="5" height="44" fill="#000"/>
<rect x="157" y="524" width="1" height="59" fill="#000"/>
<rect x="155.5" y="571.5" width="4" height="11" fill="#fff" stroke="#000" stroke-width="1"/>
<rect x="165" y="569" width="1" height="66" fill="#000"/>
<rect x="163" y="571" width="5" height="7" fill="#000"/>
<rect x="173" y="536" width="1" height="56" fill="#000"/>
<rect x="171.5" y="567.5" width="4" height="10" fill="#fff" stroke="#000" stroke-width="1"/>
<rect x="181" y="536" width="1" height="63" fill="#000"/>
<rect x="179.5" y="552.5" width="4" height="14" fill="#fff" stroke="#000" stroke-width="1"/>
<rect x="189" y="549" width="1" height="58" fill="#000"/>
<rect x="187" y="551" width="5" height="51" fill="#000"/>
<rect x="197" y="498" width="1" height="116" fill="#000"/>
<rect x="195.5" y="566.5" width="4" height="35" fill="#fff" stroke="#000" stroke-width="1"/>
<rect x="205" y="534" width="1" height="60" fill="#000"/>
<rect x="203.5" y="537.5" width="4" height="29" fill="#fff" stroke="#000" stroke-width="1"/>
<rect x="213" y="490" width="1" height="97" fill="#000"/>
<rect x="211.5" y="498.5" width="4" height="40" fill="#fff" stroke="#000" stroke-width="1"/>
<rect x="221" y="450" width="1" height="69" fill="#000"/>
<rect x="219" y="497" width="5" height="22" fill="#000"/>
<rect x="229" y="474" width="1" height="55" fill="#000"/>
<rect x="227.5" y="503.5" width="4" height="15" fill="#fff" stroke="#000" stroke-width="1"/>
<rect x="237" y="482" width="1" height="71" fill="#000"/>
<rect x="235" y="503" width="5" height="28" fill="#000"/>
<rect x="245" y="488" width="1" height="43" fill="#000"/>
<rect x="243.5" y="488.5" width="4" height="42" fill="#fff" stroke="#000" stroke-width="1"/>
<rect x="253" y="504" width="1" height="28" fill="#000"/>
<rect x="251" y="512" width="5" height="10" fill="#000"/>
<rect x="261" y="518" width="1" height="17" fill="#000"/>
<rect x="259" y="520" width="5" height="12" fill="#000"/>
<rect x="269" y="527" width="1" height="47" fill="#000"/>
<rect x="267" y="530" width="5" height="15" fill="#000"/>
<rect x="277" y="544" width="1" height="26" fill="#000"/>
<rect x="275" y="544" width="5" height="26" fill="#000"/>
<rect x="285" y="532" width="1" height="43" fill="#000"/>
<rect x="283.5" y="541.5" width="4" height="28" fill="#fff" stroke="#000" stroke-width="1"/>
<rect x="293" y="540" width="1" height="23" fill="#000"/>
<rect x="291" y="541" width="5" height="9" fill="#000"/>
<rect x="301" y="538" width="1" height="14" fill="#000"/>
<rect x="299.5" y="544.5" width="4" height="5" fill="#fff" stroke="#000" stroke-width="1"/>
<rect x="309" y="528" width="1" height="20" fill="#000"/>
<rect x="307.5" y="535.5" width="4" height="9" fill="#fff" stroke="#000" stroke-width="1"/>
<rect x="317" y="510" width="1" height="26" fill="#000"/>
<rect x="315.5" y="527.5" width="4" height="8" fill="#fff" stroke="#000" stroke-width="1"/>
<rect x="325" y="526" width="1" height="34" fill="#000"/>
<rect x="323" y="526" width="5" height="9" fill="#000"/>
<rect x="333" y="515" width="1" height="66" fill="#000"/>
<rect x="331" y="532" width="5" height="40" fill="#000"/>
<rect x="341" y="546" width="1" height="37" fill="#000"/>
<rect x="339" y="570" width="5" height="6" fill="#000"/>
<rect x="349" y="560" width="1" height="90" fill="#000"/>
<rect x="347" y="574" width="5" height="76" fill="#000"/>
<rect x="357" y="589" width="1" height="72" fill="#000"/>
<rect x="355.5" y="592.5" width="4" height="64" fill="#fff" stroke="#000" stroke-width="1"/>
<rect x="365" y="556" width="1" height="52" fill="#000"/>
<rect x="363.5" y="565.5" width="4" height="27" fill="#fff" stroke="#000" stroke-width="1"/>
<rect x="373" y="458" width="1" height="125" fill="#000"/>
<rect x="371.5" y="484.5" width="4" height="81" fill="#fff" stroke="#000" stroke-width="1"/>
<rect x="381" y="443" width="1" height="48" fill="#000"/>
<rect x="379.5" y="450.5" width="4" height="34" fill="#fff" stroke="#000" stroke-width="1"/>
<rect x="389" y="376" width="1" height="75" fill="#000"/>
<rect x="387.5" y="382.5" width="4" height="68" fill="#fff" stroke="#000" stroke-width="1"/>
<rect x="397" y="322" width="1" height="75" fill="#000"/>
<rect x="395.5" y="348.5" width="4" height="34" fill="#fff" stroke="#000" stroke-width="1"/>
<rect x="405" y="330" width="1" height="45" fill="#000"/>
<rect x="403" y="348" width="5" height="20" fill="#000"/>
<rect x="413" y="332" width="1" height="51" fill="#000"/>
<rect x="411.5" y="351.5" width="4" height="17" fill="#fff" stroke="#000" stroke-width="1"/>
<rect x="421" y="331" width="1" height="44" fill="#000"/>
<rect x="419" y="351" width="5" height="23" fill="#000"/>
<rect x="429" y="352" width="1" height="23" fill="#000"/>
<rect x="427.5" y="360.5" width="4" height="12" fill="#fff" stroke="#000" stroke-width="1"/>
<rect x="437" y="352" width="1" height="22" fill="#000"/>
<rect x="435" y="360" width="5" height="7" fill="#000"/>
<rect x="445" y="357" width="1" height="24" fill="#000"/>
<rect x="443" y="365" width="5" height="4" fill="#000"/>
<rect x="453" y="357" width="1" height="22" fill="#000"/>
<rect x="451" y="368" width="5" height="7" fill="#000"/>
<rect x="461" y="374" width="1" height="9" fill="#000"/>
<rect x="459" y="374" width="5" height="7" fill="#000"/>
<rect x="469" y="378" width="1" height="11" fill="#000"/>
<rect x="467" y="380" width="5" height="7" fill="#000"/>
<rect x="477" y="382" width="1" height="48" fill="#000"/>
<rect x="475" y="385" width="5" height="31" fill="#000"/>
<rect x="485" y="406" width="1" height="15" fill="#000"/>
<rect x="483.5" y="406.5" width="4" height="9" fill="#fff" stroke="#000" stroke-width="1"/>
<rect x="493" y="388" width="1" height="30" fill="#000"/>
<rect x="491.5" y="396.5" width="4" height="10" fill="#fff" stroke="#000" stroke-width="1"/>
<rect x="501" y="392" width="1" height="24" fill="#000"/>
<rect x="499" y="395" width="5" height="19" fill="#000"/>
<rect x="509" y="357" width="1" height="68" fill="#000"/>
<rect x="507.5" y="382.5" width="4" height="33" fill="#fff" stroke="#000" stroke-width="1"/>
<rect x="517" y="344" width="1" height="45" fill="#000"/>
<rect x="515.5" y="369.5" width="4" height="11" fill="#fff" stroke="#000" stroke-width="1"/>
<rect x="525" y="366" width="1" height="48" fill="#000"/>
<rect x="523" y="368" width="5" height="26" fill="#000"/>
<rect x="533" y="342" width="1" height="81" fill="#000"/>
<rect x="531" y="393" width="5" height="4" fill="#000"/>
<rect x="541" y="376" width="1" height="51" fill="#000"/>
<rect x="539.5" y="382.5" width="4" height="14" fill="#fff" stroke="#000" stroke-width="1"/>
<rect x="549" y="378" width="1" height="47" fill="#000"/>
<rect x="547" y="380" width="5" height="10" fill="#000"/>
<rect x="557" y="388" width="1" height="38" fill="#000"/>
<rect x="555" y="389" width="5" height="25" fill="#000"/>
<rect x="565" y="412" width="1" height="46" fill="#000"/>
<rect x="563" y="412" width="5" height="8" fill="#000"/>
<rect x="573" y="406" width="1" height="50" fill="#000"/>
<rect x="571" y="419" width="5" height="4" fill="#000"/>
<rect x="581" y="347" width="1" height="148" fill="#000"/>
<rect x="579.5" y="362.5" width="4" height="60" fill="#fff" stroke="#000" stroke-width="1"/>
<rect x="589" y="326" width="1" height="100" fill="#000"/>
<rect x="587" y="360" width="5" height="61" fill="#000"/>
<rect x="597" y="323" width="1" height="99" fill="#000"/>
<rect x="595.5" y="356.5" width="4" height="64" fill="#fff" stroke="#000" stroke-width="1"/>
<rect x="605" y="338" width="1" height="57" fill="#000"/>
<rect x="603" y="357" width="5" height="31" fill="#000"/>
<rect x="613" y="344" width="1" height="45" fill="#000"/>
<rect x="611.5" y="368.5" width="4" height="19" fill="#fff" stroke="#000" stroke-width="1"/>
<rect x="621" y="349" width="1" height="32" fill="#000"/>
<rect x="619.5" y="364.5" width="4" height="6" fill="#fff" stroke="#000" stroke-width="1"/>
<rect x="629" y="356" width="1" height="28" fill="#000"/>
<rect x="627" y="364" width="5" height="14" fill="#000"/>
<rect x="637" y="360" width="1" height="28" fill="#000"/>
<rect x="635" y="377" width="5" height="6" fill="#000"/>
<rect x="645" y="366" width="1" height="20" fill="#000"/>
<rect x="643.5" y="366.5" width="4" height="16" fill="#fff" stroke="#000" stroke-width="1"/>
<rect x="653" y="312" width="1" height="63" fill="#000"/>
<rect x="651.5" y="332.5" width="4" height="33" fill="#fff" stroke="#000" stroke-width="1"/>
<rect x="661" y="318" width="1" height="28" fill="#000"/>
<rect x="659.5" y="330.5" width="4" height="2" fill="#fff" stroke="#000" stroke-width="1"/>
<rect x="669" y="313" width="1" height="28" fill="#000"/>
<rect x="667.5" y="317.5" width="4" height="13" fill="#fff" stroke="#000" stroke-width="1"/>
<rect x="677" y="313" width="1" height="21" fill="#000"/>
<rect x="675" y="315" width="5" height="9" fill="#000"/>
<rect x="685" y="315" width="1" height="12" fill="#000"/>
<rect x="683.5" y="320.5" width="4" height="3" fill="#fff" stroke="#000" stroke-width="1"/>
<rect x="693" y="308" width="1" height="19" fill="#000"/>
<rect x="691.5" y="312.5" width="4" height="8" fill="#fff" stroke="#000" stroke-width="1"/>
<rect x="701" y="263" width="1" height="58" fill="#000"/>
<rect x="699.5" y="271.5" width="4" height="42" fill="#fff" stroke="#000" stroke-width="1"/>
<rect x="709" y="232" width="1" height="59" fill="#000"/>
<rect x="707.5" y="254.5" width="4" height="18" fill="#fff" stroke="#000" stroke-width="1"/>
<rect x="717" y="214" width="1" height="67" fill="#000"/>
<rect x="715.5" y="217.5" width="4" height="37" fill="#fff" stroke="#000" stroke-width="1"/>
<rect x="725" y="169" width="1" height="74" fill="#000"/>
<rect x="723" y="216" width="5" height="18" fill="#000"/>
<rect x="733" y="218" width="1" height="46" fill="#000"/>
<rect x="731" y="232" width="5" height="13" fill="#000"/>
<rect x="741" y="239" width="1" height="36" fill="#000"/>
<rect x="739" y="242" width="5" height="26" fill="#000"/>
<rect x="749" y="253" width="1" height="88" fill="#000"/>
<rect x="747" y="268" width="5" height="67" fill="#000"/>
<rect x="757" y="258" width="1" height="80" fill="#000"/>
<rect x="755.5" y="269.5" width="4" height="65" fill="#fff" stroke="#000" stroke-width="1"/>
<rect x="765" y="265" width="1" height="38" fill="#000"/>
<rect x="763" y="269" width="5" height="12" fill="#000"/>
<rect x="773" y="256" width="1" height="40" fill="#000"/>
<rect x="771" y="281" width="5" height="13" fill="#000"/>
<rect x="781" y="265" width="1" height="30" fill="#000"/>
<rect x="779.5" y="267.5" width="4" height="26" fill="#fff" stroke="#000" stroke-width="1"/>
<rect x="789" y="239" width="1" height="39" fill="#000"/>
<rect x="787.5" y="239.5" width="4" height="28" fill="#fff" stroke="#000" stroke-width="1"/>
<rect x="797" y="204" width="1" height="50" fill="#000"/>
<rect x="795.5" y="211.5" width="4" height="28" fill="#fff" stroke="#000" stroke-width="1"/>
<rect x="805" y="189" width="1" height="46" fill="#000"/>
<rect x="803.5" y="198.5" width="4" height="13" fill="#fff" stroke="#000" stroke-width="1"/>
<rect x="813" y="181" width="1" height="28" fill="#000"/>
<rect x="811.5" y="184.5" width="4" height="14" fill="#fff" stroke="#000" stroke-width="1"/>
<rect x="821" y="180" width="1" height="35" fill="#000"/>
<rect x="819" y="181" width="5" height="16" fill="#000"/>
<rect x="829" y="187" width="1" height="28" fill="#000"/>
<rect x="827" y="195" width="5" height="2" fill="#000"/>
<rect x="837" y="189" width="1" height="15" fill="#000"/>
<rect x="835" y="197" width="5" height="1" fill="#000"/>
<rect x="845" y="188" width="1" height="27" fill="#000"/>
<rect x="843" y="197" width="5" height="9" fill="#000"/>
<rect x="853" y="169" width="1" height="38" fill="#000"/>
<rect x="851.5" y="178.5" width="4" height="27" fill="#fff" stroke="#000" stroke-width="1"/>
<rect x="861" y="138" width="1" height="46" fill="#000"/>
<rect x="859.5" y="148.5" width="4" height="30" fill="#fff" stroke="#000" stroke-width="1"/>
<rect x="869" y="147" width="1" height="14" fill="#000"/>
<rect x="867" y="149" width="5" height="3" fill="#000"/>
<rect x="877" y="138" width="1" height="15" fill="#000"/>
<rect x="875.5" y="145.5" width="4" height="5" fill="#fff" stroke="#000" stroke-width="1"/>
<rect x="885" y="139" width="1" height="34" fill="#000"/>
<rect x="883" y="145" width="5" height="27" fill="#000"/>
<rect x="893" y="151" width="1" height="29" fill="#000"/>
<rect x="891" y="170" width="5" height="6" fill="#000"/>
<rect x="901" y="151" width="1" height="45" fill="#000"/>
<rect x="899" y="175" width="5" height="6" fill="#000"/>
<rect x="909" y="158" width="1" height="67" fill="#000"/>
<rect x="907" y="180" width="5" height="32" fill="#000"/>
<rect x="917" y="180" width="1" height="37" fill="#000"/>
<rect x="915.5" y="183.5" width="4" height="28" fill="#fff" stroke="#000" stroke-width="1"/>
<rect x="925" y="173" width="1" height="40" fill="#000"/>
<rect x="923" y="182" width="5" height="29" fill="#000"/>
<rect x="933" y="200" width="1" height="35" fill="#000"/>
<rect x="931" y="209" width="5" height="19" fill="#000"/>
<rect x="941" y="218" width="1" height="59" fill="#000"/>
<rect x="939" y="227" width="5" height="49" fill="#000"/>
<rect x="949" y="261" width="1" height="89" fill="#000"/>
<rect x="947" y="274" width="5" height="75" fill="#000"/>
<rect x="957" y="344" width="1" height="127" fill="#000"/>
<rect x="955" y="348" width="5" height="113" fill="#000"/>
<rect x="965" y="453" width="1" height="55" fill="#000"/>
<rect x="963" y="459" width="5" height="18" fill="#000"/>
<rect x="973" y="438" width="1" height="49" fill="#000"/>
<rect x="971.5" y="444.5" width="4" height="32" fill="#fff" stroke="#000" stroke-width="1"/>
<rect x="981" y="441" width="1" height="53" fill="#000"/>
<rect x="979" y="444" width="5" height="40" fill="#000"/>
<rect x="989" y="465" width="1" height="42" fill="#000"/>
<rect x="987.5" y="467.5" width="4" height="15" fill="#fff" stroke="#000" stroke-width="1"/>
<rect x="997" y="459" width="1" height="28" fill="#000"/>
<rect x="995" y="467" width="5" height="18" fill="#000"/>
<rect x="1005" y="476" width="1" height="37" fill="#000"/>
<rect x="1003" y="484" width="5" height="8" fill="#000"/>
<rect x="1013" y="468" width="1" height="24" fill="#000"/>
<rect x="1011" y="491" width="5" height="1" fill="#000"/>
<rect x="1021" y="470" width="1" height="23" fill="#000"/>
<rect x="1019.5" y="479.5" width="4" height="11" fill="#fff" stroke="#000" stroke-width="1"/>
<rect x="1029" y="453" width="1" height="28" fill="#000"/>
<rect x="1027.5" y="467.5" width="4" height="12" fill="#fff" stroke="#000" stroke-width="1"/>
<rect x="1037" y="437" width="1" height="37" fill="#000"/>
<rect x="1035.5" y="437.5" width="4" height="28" fill="#fff" stroke="#000" stroke-width="1"/>
<rect x="1045" y="435" width="1" height="22" fill="#000"/>
<rect x="1043" y="438" width="5" height="7" fill="#000"/>
<polyline points="13.2,478.2 31.5,475.8 53.0,475.4 74.5,473.2 96.0,469.6 117.5,466.8 132.6,465.1 141.2,466.8 159.6,476.3 174.4,481.4 189.2,485.8 204.0,489.3 218.8,490.5 233.6,491.7 248.3,492.6 263.1,494.1 277.9,496.4 292.7,499.1 307.5,501.5 320.0,503.6 333.4,506.3 346.9,511.1 360.3,515.2 369.7,516.2 380.5,513.0 395.3,505.0 406.0,500.0 418.7,492.6 434.1,485.0 449.4,479.1 462.2,474.7 474.9,470.9 487.7,468.4 500.5,464.0 513.3,460.2 526.0,456.9 538.8,453.0 551.6,450.5 562.1,450.0 574.2,449.2 582.3,446.5 598.4,441.9 614.5,438.4 622.6,435.8 638.7,432.3 654.8,427.7 671.0,421.5 687.1,416.1 703.2,408.9 716.7,400.0 730.1,390.0 740.9,384.7 750.0,383.9 760.0,382.5 775.0,378.0 790.0,370.0 805.0,360.0 820.2,350.0 833.0,342.5 845.7,335.6 858.5,327.2 873.7,315.8 888.5,307.0 903.3,301.6 918.0,296.0 932.8,292.8 944.7,292.2 952.1,295.1 968.3,304.6 983.1,313.5 997.9,321.7 1012.7,329.7 1027.5,337.4 1044.9,346.6" fill="none" stroke="#0000FF" stroke-width="1" shape-rendering="crispEdges"/>
<polyline points="13.2,411.9 19.7,411.9 26.1,415.2 32.6,420.5 39.0,425.5 45.5,429.1 53.0,432.8 61.6,435.6 70.2,437.7 78.8,437.7 85.3,436.2 96.0,435.2 106.8,434.9 117.5,435.6 128.3,435.6 134.7,436.4 138.0,439.5 141.8,447.3 150.7,460.7 159.6,472.5 168.5,484.3 177.3,494.7 186.2,505.0 195.1,513.3 204.0,516.9 212.8,515.4 221.7,514.5 230.6,515.4 239.5,514.8 248.3,512.4 254.3,513.0 263.1,516.3 272.0,519.8 280.9,524.3 289.8,527.2 298.6,529.3 307.5,529.6 316.4,529.3 322.0,530.0 328.0,532.4 336.1,535.3 344.2,542.6 349.6,549.3 356.3,554.1 364.4,555.0 372.4,549.3 380.5,537.2 388.5,519.7 396.6,503.6 403.4,491.5 411.1,478.6 418.7,465.8 426.4,454.3 434.1,444.1 441.7,436.4 449.4,430.1 457.1,424.9 464.7,421.6 472.4,419.8 482.6,418.6 492.8,416.0 503.0,414.0 510.7,410.9 518.4,406.6 526.0,405.8 533.7,405.0 541.4,402.5 549.0,402.0 558.0,402.2 566.1,404.3 574.2,404.3 580.9,402.2 589.0,402.7 597.0,399.5 605.1,396.8 613.2,394.6 621.2,391.4 629.3,389.5 637.4,388.7 645.4,386.0 653.5,380.6 661.6,375.3 669.6,368.5 677.7,364.5 685.8,359.7 693.8,355.1 697.7,350.0 705.3,338.7 715.5,323.4 725.7,311.9 733.4,306.0 741.1,303.0 748.7,304.8 757.7,301.7 766.6,299.1 775.5,297.9 784.5,293.3 792.1,286.4 799.8,278.0 807.4,268.5 815.1,260.8 822.8,254.5 830.4,248.8 838.1,244.3 845.7,240.4 853.4,234.0 861.0,225.1 867.8,215.2 876.6,208.7 885.5,204.3 894.4,201.3 903.3,199.9 912.1,199.9 921.0,199.9 928.4,201.3 935.8,204.9 943.2,211.7 949.1,224.1 955.0,238.9 960.9,256.7 966.9,272.9 971.3,281.8 980.2,305.5 989.1,326.2 997.7,345.3 1005.3,359.4 1011.7,369.6 1019.4,382.3 1027.0,391.3 1034.7,395.9 1044.9,402.0" fill="none" stroke="#FF0000" stroke-width="2" stroke-linejoin="round" shape-rendering="crispEdges"/>
<polyline points="13.0,424.6 356.8,659.5 397.0,321.5 580.9,493.5 877.0,138.0 1004.8,512.5" fill="none" stroke="#2F4F4F" stroke-width="2.2" stroke-linejoin="miter" shape-rendering="crispEdges"/>
<path d="M1081.5 348.5 h8 v12.5 h4.5 l-8.5 9 l-8.5 -9 h4.5 z" fill="#fff" stroke="#FF0000" stroke-width="1.5" stroke-linejoin="miter"/>
<path d="M1050 110 h9.5 l-4.75 5 z" fill="#C0C0C0"/>
</svg>
<rect x="12.5" y="109.5" width="1308" height="566" fill="none" stroke="#000" stroke-width="1"/>
<text x="1306.1" y="135" font-size="9.8" fill="#800000" textLength="12.5" lengthAdjust="spacingAndGlyphs">0.0</text>
<text x="1301.1" y="224" font-size="9.8" fill="#800000" textLength="17.5" lengthAdjust="spacingAndGlyphs">23.6</text>
<text x="1301.1" y="279" font-size="9.8" fill="#800000" textLength="17.5" lengthAdjust="spacingAndGlyphs">38.2</text>
<text x="1301.1" y="324" font-size="9.8" fill="#800000" textLength="17.5" lengthAdjust="spacingAndGlyphs">50.0</text>
<text x="1301.1" y="368" font-size="9.8" fill="#800000" textLength="17.5" lengthAdjust="spacingAndGlyphs">61.8</text>
<text x="1296.1" y="513" font-size="9.8" fill="#800000" textLength="22.5" lengthAdjust="spacingAndGlyphs">100.0</text>
<text x="19.4" y="262.5" font-size="9.8" fill="#000" textLength="81.4" lengthAdjust="spacingAndGlyphs">#4182571 buy 0.02</text>
<text x="19.4" y="335.9" font-size="9.8" fill="#000" textLength="81.4" lengthAdjust="spacingAndGlyphs">#4185990 buy 0.02</text>
<text x="19.4" y="655.6" font-size="9.8" fill="#000" textLength="78.4" lengthAdjust="spacingAndGlyphs">#4042211 sell 0.02</text>
<text x="19.4" y="668" font-size="9.8" fill="#000" textLength="52.5" lengthAdjust="spacingAndGlyphs">#4042211 tp</text>
<path d="M16 116 h7.2 l-3.6 4.2 z" fill="#000"/>
<text x="28.4" y="120.7" font-size="9.6" fill="#000" textLength="58.7" lengthAdjust="spacingAndGlyphs">GBPUSDh,H1</text>
<text x="93.7" y="120.7" font-size="9.6" fill="#000" textLength="139.6" lengthAdjust="spacingAndGlyphs">1.54244 1.54256 1.54173 1.54221</text>
<rect x="1321" y="141" width="3" height="1" fill="#000"/>
<text x="1326.5" y="144.4" font-size="9.8" fill="#000" textLength="32.6" lengthAdjust="spacingAndGlyphs">1.55490</text>
<rect x="1321" y="175" width="3" height="1" fill="#000"/>
<text x="1326.5" y="178.4" font-size="9.8" fill="#000" textLength="32.6" lengthAdjust="spacingAndGlyphs">1.55350</text>
<rect x="1321" y="208" width="3" height="1" fill="#000"/>
<text x="1326.5" y="211.4" font-size="9.8" fill="#000" textLength="32.6" lengthAdjust="spacingAndGlyphs">1.55210</text>
<rect x="1321" y="241" width="3" height="1" fill="#000"/>
<text x="1326.5" y="244.4" font-size="9.8" fill="#000" textLength="32.6" lengthAdjust="spacingAndGlyphs">1.55070</text>
<rect x="1321" y="274" width="3" height="1" fill="#000"/>
<text x="1326.5" y="277.4" font-size="9.8" fill="#000" textLength="32.6" lengthAdjust="spacingAndGlyphs">1.54935</text>
<rect x="1321" y="307" width="3" height="1" fill="#000"/>
<text x="1326.5" y="310.4" font-size="9.8" fill="#000" textLength="32.6" lengthAdjust="spacingAndGlyphs">1.54795</text>
<rect x="1321" y="340" width="3" height="1" fill="#000"/>
<text x="1326.5" y="343.4" font-size="9.8" fill="#000" textLength="32.6" lengthAdjust="spacingAndGlyphs">1.54655</text>
<rect x="1321" y="407" width="3" height="1" fill="#000"/>
<text x="1326.5" y="410.4" font-size="9.8" fill="#000" textLength="32.6" lengthAdjust="spacingAndGlyphs">1.54375</text>
<rect x="1321" y="473" width="3" height="1" fill="#000"/>
<text x="1326.5" y="476.4" font-size="9.8" fill="#000" textLength="32.6" lengthAdjust="spacingAndGlyphs">1.54095</text>
<rect x="1321" y="506" width="3" height="1" fill="#000"/>
<text x="1326.5" y="509.4" font-size="9.8" fill="#000" textLength="32.6" lengthAdjust="spacingAndGlyphs">1.53960</text>
<rect x="1321" y="539" width="3" height="1" fill="#000"/>
<text x="1326.5" y="542.4" font-size="9.8" fill="#000" textLength="32.6" lengthAdjust="spacingAndGlyphs">1.53820</text>
<rect x="1321" y="573" width="3" height="1" fill="#000"/>
<text x="1326.5" y="576.4" font-size="9.8" fill="#000" textLength="32.6" lengthAdjust="spacingAndGlyphs">1.53680</text>
<rect x="1321" y="606" width="3" height="1" fill="#000"/>
<text x="1326.5" y="609.4" font-size="9.8" fill="#000" textLength="32.6" lengthAdjust="spacingAndGlyphs">1.53540</text>
<rect x="1321" y="639" width="3" height="1" fill="#000"/>
<text x="1326.5" y="642.4" font-size="9.8" fill="#000" textLength="32.6" lengthAdjust="spacingAndGlyphs">1.53400</text>
<rect x="1321" y="672" width="3" height="1" fill="#000"/>
<text x="1326.5" y="675.4" font-size="9.8" fill="#000" textLength="32.6" lengthAdjust="spacingAndGlyphs">1.53260</text>
<rect x="1322" y="369" width="38" height="11" fill="#FF0000"/>
<text x="1326.5" y="377.7" font-size="9.8" fill="#fff" textLength="32.6" lengthAdjust="spacingAndGlyphs">1.54508</text>
<rect x="1321" y="374" width="1" height="1" fill="#000"/>
<rect x="1322" y="438" width="38" height="11" fill="#000000"/>
<text x="1326.5" y="446.7" font-size="9.8" fill="#fff" textLength="32.6" lengthAdjust="spacingAndGlyphs">1.54221</text>
<rect x="1321" y="443" width="1" height="1" fill="#000"/>
<rect x="1322" y="489" width="38" height="11" fill="#800000"/>
<text x="1326.5" y="497.7" font-size="9.8" fill="#fff" textLength="32.6" lengthAdjust="spacingAndGlyphs">1.54005</text>
<rect x="1321" y="494" width="1" height="1" fill="#000"/>
<rect x="13" y="676" width="1" height="3" fill="#000"/>
<text x="12.7" y="688" font-size="10" fill="#000" textLength="51.3" lengthAdjust="spacingAndGlyphs">19 Feb 2015</text>
<rect x="77" y="676" width="1" height="3" fill="#000"/>
<text x="77" y="688" font-size="10" fill="#000" textLength="54.5" lengthAdjust="spacingAndGlyphs">20 Feb 00:00</text>
<rect x="141" y="676" width="1" height="3" fill="#000"/>
<text x="141" y="688" font-size="10" fill="#000" textLength="54.5" lengthAdjust="spacingAndGlyphs">20 Feb 08:00</text>
<rect x="205" y="676" width="1" height="3" fill="#000"/>
<text x="205" y="688" font-size="10" fill="#000" textLength="54.5" lengthAdjust="spacingAndGlyphs">20 Feb 16:00</text>
<rect x="269" y="676" width="1" height="3" fill="#000"/>
<text x="269" y="688" font-size="10" fill="#000" textLength="54.5" lengthAdjust="spacingAndGlyphs">23 Feb 00:00</text>
<rect x="333" y="676" width="1" height="3" fill="#000"/>
<text x="333" y="688" font-size="10" fill="#000" textLength="54.5" lengthAdjust="spacingAndGlyphs">23 Feb 08:00</text>
<rect x="397" y="676" width="1" height="3" fill="#000"/>
<text x="397" y="688" font-size="10" fill="#000" textLength="54.5" lengthAdjust="spacingAndGlyphs">23 Feb 16:00</text>
<rect x="461" y="676" width="1" height="3" fill="#000"/>
<text x="461" y="688" font-size="10" fill="#000" textLength="54.5" lengthAdjust="spacingAndGlyphs">24 Feb 00:00</text>
<rect x="525" y="676" width="1" height="3" fill="#000"/>
<text x="525" y="688" font-size="10" fill="#000" textLength="54.5" lengthAdjust="spacingAndGlyphs">24 Feb 08:00</text>
<rect x="589" y="676" width="1" height="3" fill="#000"/>
<text x="589" y="688" font-size="10" fill="#000" textLength="54.5" lengthAdjust="spacingAndGlyphs">24 Feb 16:00</text>
<rect x="653" y="676" width="1" height="3" fill="#000"/>
<text x="653" y="688" font-size="10" fill="#000" textLength="54.5" lengthAdjust="spacingAndGlyphs">25 Feb 00:00</text>
<rect x="717" y="676" width="1" height="3" fill="#000"/>
<text x="717" y="688" font-size="10" fill="#000" textLength="54.5" lengthAdjust="spacingAndGlyphs">25 Feb 08:00</text>
<rect x="781" y="676" width="1" height="3" fill="#000"/>
<text x="781" y="688" font-size="10" fill="#000" textLength="54.5" lengthAdjust="spacingAndGlyphs">25 Feb 16:00</text>
<rect x="845" y="676" width="1" height="3" fill="#000"/>
<text x="845" y="688" font-size="10" fill="#000" textLength="54.5" lengthAdjust="spacingAndGlyphs">26 Feb 00:00</text>
<rect x="909" y="676" width="1" height="3" fill="#000"/>
<text x="909" y="688" font-size="10" fill="#000" textLength="54.5" lengthAdjust="spacingAndGlyphs">26 Feb 08:00</text>
<rect x="973" y="676" width="1" height="3" fill="#000"/>
<text x="973" y="688" font-size="10" fill="#000" textLength="54.5" lengthAdjust="spacingAndGlyphs">26 Feb 16:00</text>
<rect x="1037" y="676" width="1" height="3" fill="#000"/>
<text x="1037" y="688" font-size="10" fill="#000" textLength="54.5" lengthAdjust="spacingAndGlyphs">27 Feb 00:00</text>
<rect x="0" y="728" width="1366" height="16" fill="#986828" fill-opacity="0.5"/>
<rect x="0" y="736" width="1366" height="8" fill="#C19652"/><rect x="0" y="743" width="1366" height="1" fill="#B88E4C"/>
<rect x="0" y="728" width="8" height="16" fill="#C19652"/><rect x="1362" y="728" width="4" height="16" fill="#C19652"/>
<rect x="176" y="729" width="58" height="16" fill="#fff" fill-opacity="0.22" stroke="#fff" stroke-opacity="0.35"/>
<rect x="423.5" y="729" width="58.0" height="16" fill="#fff" fill-opacity="0.22" stroke="#fff" stroke-opacity="0.35"/>
<rect x="485.5" y="729" width="58.0" height="16" fill="#fff" fill-opacity="0.38" stroke="#fff" stroke-opacity="0.35"/>
<rect x="547.5" y="729" width="58.0" height="16" fill="#fff" fill-opacity="0.22" stroke="#fff" stroke-opacity="0.35"/>
<rect x="609" y="729" width="58" height="16" fill="#fff" fill-opacity="0.22" stroke="#fff" stroke-opacity="0.35"/>
<path d="M12 738.5 L23 737 V744 H12 Z M24.5 736.8 L38 735 V744 H24.5 Z" fill="#fff"/>
<rect x="66" y="733" width="30" height="11" fill="#0E8A16"/><path d="M73 744 v-3.5 h16 v3.5 M77 740.5 q0 -4.5 4 -4.5 q4 0 4 4.5" stroke="#fff" stroke-width="1.5" fill="none"/>
<path d="M128 736.5 L146 733.5 V744 H128 Z" fill="#2B579A"/><rect x="146" y="736" width="12" height="8" fill="#fff" stroke="#2B579A"/><path d="M148 739.5 h8 M148 742.5 h8" stroke="#2B579A" stroke-width="1.2"/>
<circle cx="205" cy="749.8" r="16" fill="#DB4437"/><path d="M205 749.8 L190 744 A16 16 0 0 1 196.5 736.2 Z" fill="#0F9D58"/><path d="M190 745 L205 749.8 L196.5 736.2 Z" fill="#0F9D58"/><path d="M205 749.8 L221 749.8 A16 16 0 0 0 217 739 L209 744 Z" fill="#FFCD40"/><circle cx="205" cy="749.8" r="7.3" fill="#fff"/><circle cx="205" cy="749.8" r="5.8" fill="#4285F4"/>
<path d="M251 744 L257 733.5 Q258 732 260 732 H271 Q273 732 274 733.5 L280.5 744 Z" fill="#C9E0F5"/><path d="M262 744 v-3 l5 -4.5 v7.5 z" fill="#4A8FD8"/><path d="M269 738 q2.5 2.5 2.5 6" stroke="#4A8FD8" stroke-width="1.2" fill="none"/>
<path d="M313 744 V737 Q313 733.5 316.5 733.5 H331 Q334.5 733.5 334.5 737 V744 Z" fill="#fff"/><path d="M320 744 l3.5 -5.5 M327 744 v-8.5 h-2.2 q-3 0 -3 3 q0 2.7 3 2.7 h2" stroke="#E0261C" stroke-width="1.8" fill="none"/>
<circle cx="390.3" cy="745.8" r="13.8" fill="#F4F4F4"/><path d="M381 734.5 L390.3 744.5 L400 734" stroke="#E01E1E" stroke-width="4.5" fill="none"/><path d="M390.3 744 v4" stroke="#E01E1E" stroke-width="4.5"/>
<circle cx="451.7" cy="747.1" r="14.1" fill="#12A5F4"/><path d="M446 744 q0 -3.5 5.5 -3.5 q4.5 0 5.5 2.8" stroke="#fff" stroke-width="2.4" fill="none"/>
<circle cx="514" cy="752" r="17" fill="#A0201A"/><path d="M506 744 q3 -6 9 -7.5 q-5 3 -6 7.5 z" fill="#C8483E"/><path d="M508.5 744 l2 -2.5 l2 0.5" stroke="#fff" stroke-width="1.4" fill="none"/>
<rect x="562.5" y="733.5" width="16" height="11" fill="#5B9BE8" stroke="#2F6FC8"/><rect x="562.5" y="733.5" width="16" height="2" fill="#2F6FC8"/><rect x="569.5" y="737.5" width="17" height="8" fill="#DCEBFA" stroke="#2F6FC8"/><rect x="569.5" y="737.5" width="17" height="2" fill="#2F6FC8"/><path d="M564.5 738 v5 M566.5 738 v5 M572 741.5 v3 M575 741 v3 M578 742 v2 M581 741 v3" stroke="#2F6FC8" stroke-width="1"/><circle cx="568" cy="745" r="3" fill="#E89030"/>
<ellipse cx="638.5" cy="746" rx="14.5" ry="13" fill="#F5A040"/><ellipse cx="638.5" cy="745.5" rx="11" ry="8.5" fill="#FBD9A8"/><path d="M629 741.5 h19" stroke="#F09030" stroke-width="1.5"/><path d="M631 744 v-2 M634 744 v-2 M637 744 v-2 M640 744 v-2 M643 744 v-2 M646 744 v-2" stroke="#F09030" stroke-width="1.2"/>
<path d="M1159 744 l3 -3 l3 3 z" fill="#fff"/><rect x="1177" y="741" width="14" height="3" fill="#fff"/><rect x="1202" y="741" width="5" height="3" fill="#fff"/><rect x="1208" y="742" width="7" height="2" fill="#fff"/><rect x="1235" y="742.5" width="4" height="1.5" fill="#fff"/>
<text x="1310.5" y="746" font-size="13" fill="#fff" textLength="20" lengthAdjust="spacingAndGlyphs">4:51</text>
</svg>
</div>
</body></html>
